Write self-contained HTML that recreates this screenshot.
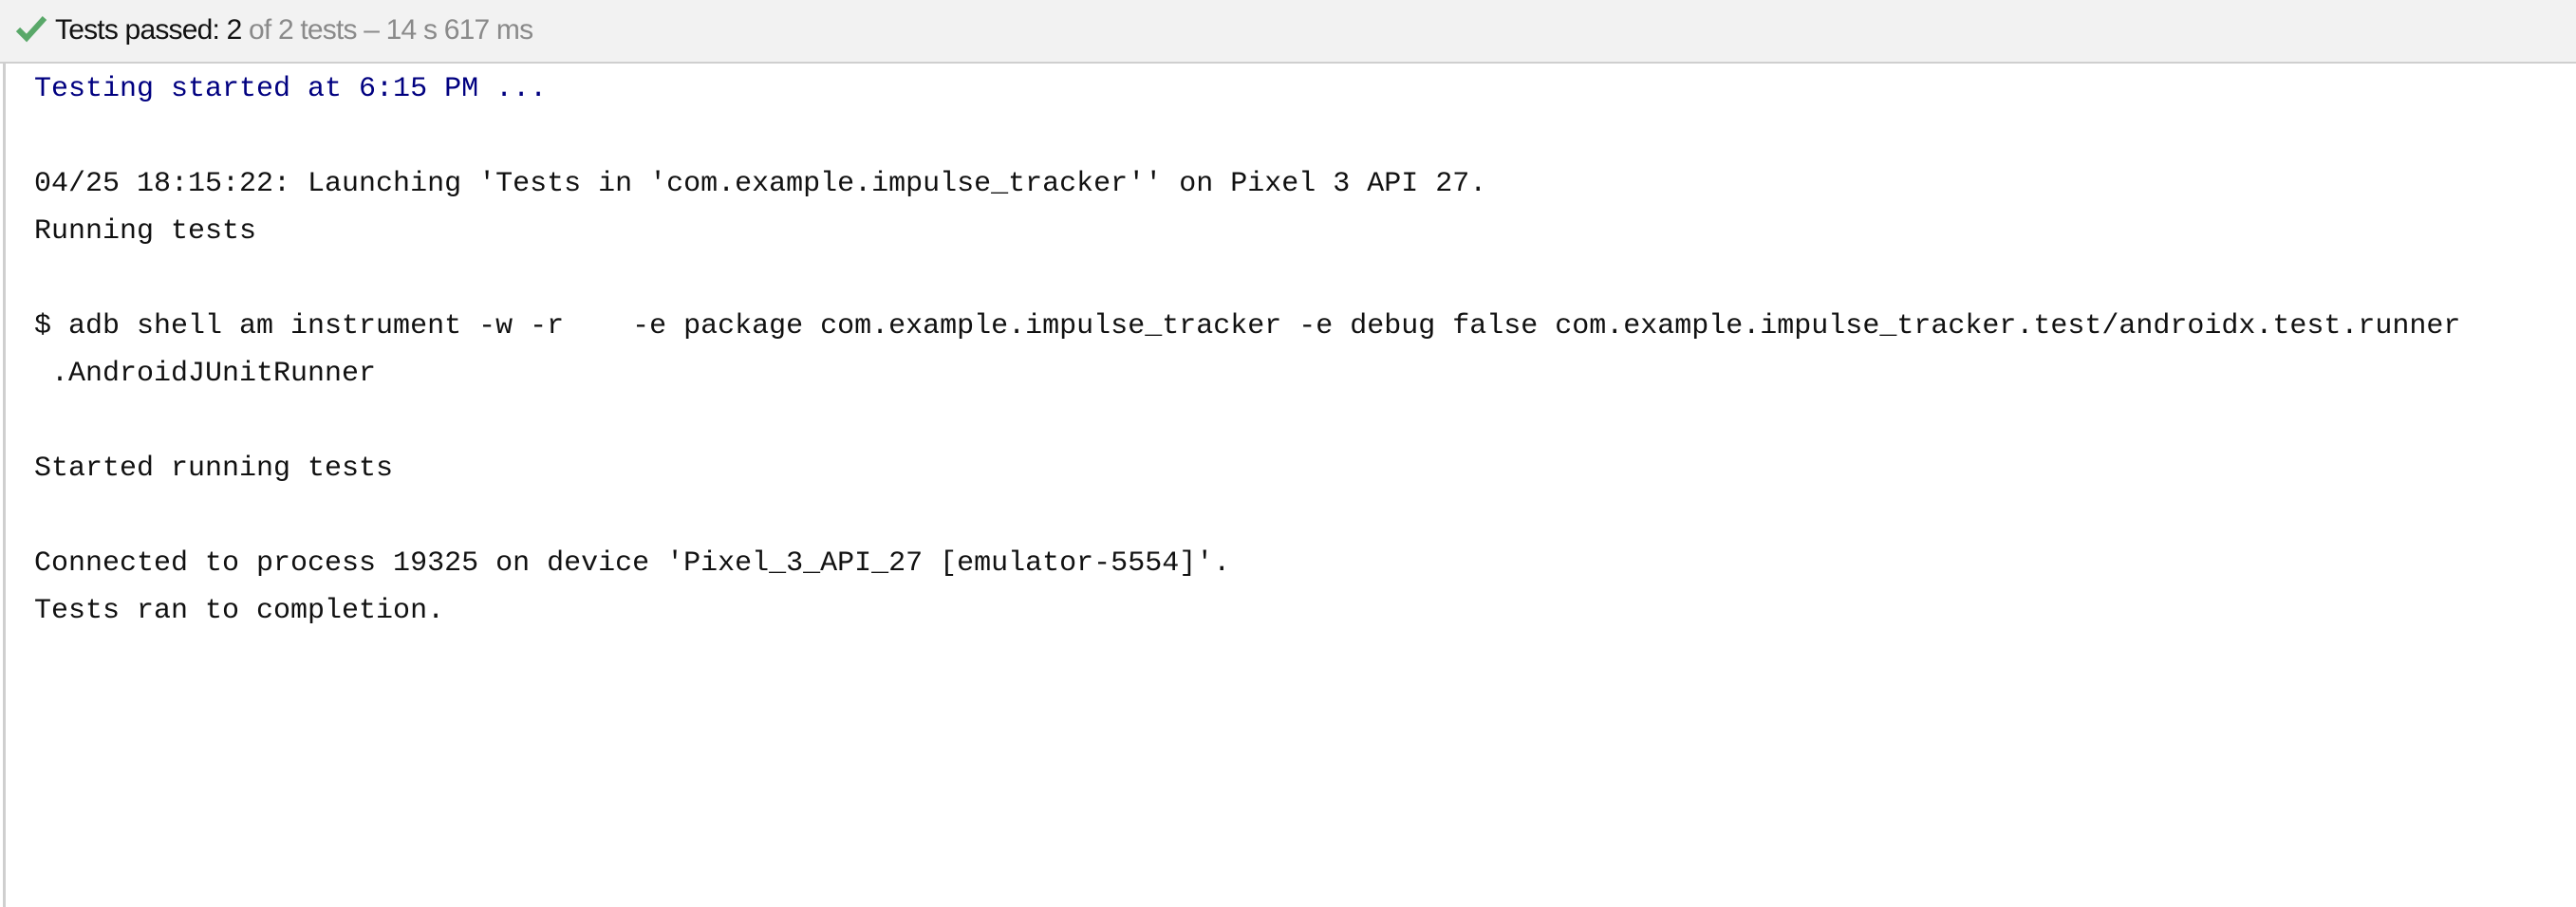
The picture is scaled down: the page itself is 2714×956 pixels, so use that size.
<!DOCTYPE html>
<html><head><meta charset="utf-8"><style>
html,body{margin:0;padding:0;width:2714px;height:956px;overflow:hidden;background:#fff}
.hdr{position:absolute;left:0;top:0;width:2714px;height:65px;background:#f2f2f2;border-bottom:2px solid #cfcfcf}
.hdr svg{position:absolute;left:16px;top:16px}
.hdr .t{position:absolute;left:58px;top:15px;font-family:"Liberation Sans",sans-serif;font-size:30px;color:#111;letter-spacing:-0.8px;white-space:nowrap}
.hdr .t span{color:#8a8a8a}
.lb{position:absolute;left:3px;top:67px;width:3px;height:889px;background:#cfcfcf}
.con{position:absolute;left:36px;top:69px;font-family:"Liberation Mono",monospace;font-size:30px;line-height:50px;color:#111;white-space:pre}
.b{color:#000080}
</style></head><body>
<div class="hdr">
<svg width="34" height="30" viewBox="0 0 34 30"><path d="M3 15 L12 24 L31 3" fill="none" stroke="#59a869" stroke-width="6"/></svg>
<div class="t">Tests passed: 2 <span>of 2 tests – 14 s 617 ms</span></div>
</div>
<div class="lb"></div>
<div class="con"><span class="b">Testing started at 6:15 PM ...</span>

04/25 18:15:22: Launching 'Tests in 'com.example.impulse_tracker'' on Pixel 3 API 27.
Running tests

$ adb shell am instrument -w -r    -e package com.example.impulse_tracker -e debug false com.example.impulse_tracker.test/androidx.test.runner
 .AndroidJUnitRunner

Started running tests

Connected to process 19325 on device 'Pixel_3_API_27 [emulator-5554]'.
Tests ran to completion.</div>
</body></html>
